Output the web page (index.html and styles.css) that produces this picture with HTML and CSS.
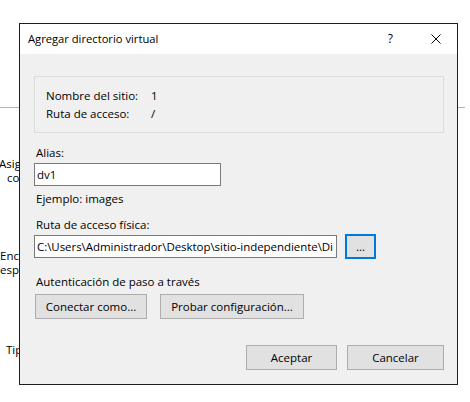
FILE: index.html
```html
<!DOCTYPE html>
<html lang="es">
<head>
<meta charset="utf-8">
<title>Agregar directorio virtual</title>
<link rel="stylesheet" href="styles.css">
</head>
<body>
<div class="screen">
  <div class="hline"></div>
  <div class="backdrop">
    <span class="bgt bg-asig">Asig</span>
    <span class="bgt bg-co">co</span>
    <span class="bgt bg-enca">Enca</span>
    <span class="bgt bg-esp">esp</span>
    <span class="bgt bg-tip">Tip</span>
  </div>
  <div class="dialog">
    <div class="titlebar">
      <span class="title">Agregar directorio virtual</span>
      <span class="help">?</span>
      <span class="close">
        <svg width="10" height="10" viewBox="0 0 10 10"><path d="M0.5 0.5 L9.5 9.5 M9.5 0.5 L0.5 9.5" stroke="#000" stroke-width="1" fill="none"/></svg>
      </span>
    </div>
    <div class="body">
      <div class="group">
        <div class="info-row"><span class="key">Nombre del sitio:</span><span>1</span></div>
        <div class="info-row"><span class="key">Ruta de acceso:</span><span>/</span></div>
      </div>
      <div class="label lbl-alias">Alias:</div>
      <div class="textbox tb-alias">dv1</div>
      <div class="label lbl-example">Ejemplo: images</div>
      <div class="label lbl-path">Ruta de acceso física:</div>
      <div class="path-row">
        <div class="textbox tb-path">C:\Users\Administrador\Desktop\sitio-independiente\Di</div>
        <div class="btn btn-browse">...</div>
      </div>
      <div class="label lbl-auth">Autenticación de paso a través</div>
      <div class="auth-row">
        <div class="btn btn-connect">Conectar como...</div>
        <div class="btn btn-test">Probar configuración...</div>
      </div>
      <div class="footer">
        <div class="btn btn-ok">Aceptar</div>
        <div class="btn btn-cancel">Cancelar</div>
      </div>
    </div>
  </div>
</div>
</body>
</html>
```
FILE: styles.css
```css
* { box-sizing: border-box; }
html, body {
  margin: 0;
  padding: 0;
  background: #ffffff;
}
body {
  font-family: "Open Sans", "Noto Sans", sans-serif;
  font-size: 11.5px;
  color: #000;
}
.screen {
  position: relative;
  width: 470px;
  height: 402px;
  overflow: hidden;
  background: #fff;
}
.hline {
  position: absolute;
  left: 0;
  top: 107px;
  width: 465px;
  height: 1px;
  background: #a7b4cc;
}
.backdrop {
  position: absolute;
  left: 0;
  top: 0;
  width: 19px;
  height: 402px;
  overflow: hidden;
}
.bgt {
  position: absolute;
  line-height: 16px;
  white-space: nowrap;
}
.bg-asig { left: -1px; top: 156px; }
.bg-co { left: 7px; top: 170px; }
.bg-enca { left: 0px; top: 248px; }
.bg-esp { left: 0px; top: 262px; }
.bg-tip { left: 6px; top: 342px; }

.dialog {
  position: absolute;
  left: 19px;
  top: 23px;
  width: 439px;
  height: 362px;
  border: 1px solid #1f1f1f;
  background: #f0f0f0;
  display: flex;
  flex-direction: column;
}
.titlebar {
  height: 30px;
  background: #fff;
  display: flex;
  align-items: center;
  padding-left: 8px;
}
.title {
  flex: 1;
  font-size: 11.2px;
  line-height: 30px;
}
.help {
  font-size: 12px;
  margin-right: 38px;
  line-height: 30px;
}
.close {
  width: 10px;
  height: 10px;
  margin-right: 16px;
  display: flex;
}
.body {
  flex: 1;
  display: flex;
  flex-direction: column;
  padding: 22px 13px 0 14px;
}
.group {
  height: 57px;
  border: 1px solid #dcdcdc;
  padding: 10px 0 0 11px;
}
.info-row {
  display: flex;
  line-height: 18px;
}
.key {
  width: 105px;
}
.label {
  line-height: 16px;
  padding-left: 2px;
}
.lbl-alias { margin-top: 12px; }
.textbox {
  height: 23px;
  border: 1px solid #7a7a7a;
  background: #fff;
  line-height: 21px;
  padding-left: 2px;
  white-space: nowrap;
  overflow: hidden;
}
.tb-alias {
  width: 187px;
  margin-top: 2px;
}
.lbl-example { margin-top: 5px; }
.lbl-path { margin-top: 10px; }
.path-row {
  display: flex;
  align-items: center;
  gap: 8px;
  margin-top: 1px;
}
.tb-path {
  width: 303px;
  letter-spacing: -0.05px;
}
.btn {
  height: 25px;
  border: 1px solid #adadad;
  background: #e1e1e1;
  display: flex;
  align-items: center;
  justify-content: center;
  line-height: 16px;
}
.btn-browse {
  width: 31px;
  border: 2px solid #0078d7;
}
.lbl-auth { margin-top: 15px; }
.auth-row {
  display: flex;
  gap: 13px;
  margin-top: 4px;
  padding-left: 1px;
}
.btn-connect { width: 112px; }
.btn-test { width: 144px; }
.footer {
  display: flex;
  justify-content: flex-end;
  gap: 10px;
  margin-top: 26px;
}
.btn-ok { width: 91px; }
.btn-cancel { width: 97px; }
```
